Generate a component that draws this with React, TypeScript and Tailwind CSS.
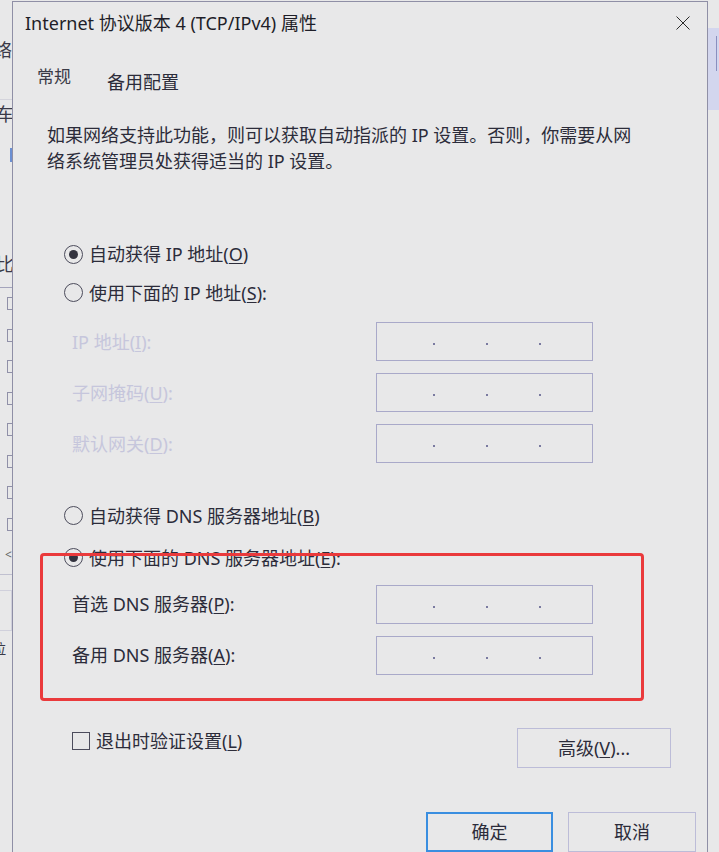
import React from "react";

// Small radio button used by the dialog
const Radio = ({ checked, children }: { checked?: boolean; children: React.ReactNode }) => (
  <div className="flex items-center h-[40px] pl-[51px]">
    <span className="w-[19px] h-[19px] rounded-full border-[1.5px] border-[#4c4c5c] flex items-center justify-center">
      {checked && <span className="w-[9px] h-[9px] rounded-full bg-[#33333f]" />}
    </span>
    <span className="ml-[6px]">{children}</span>
  </div>
);

// Empty IPv4 box with three dots
const IpBox = () => (
  <div className="w-[217px] h-[39px] border border-[#a9a9c9] flex items-center pl-[56px] pt-[5px] gap-[51px]">
    <span className="w-[2px] h-[2px] bg-[#7a7aa0]" />
    <span className="w-[2px] h-[2px] bg-[#7a7aa0]" />
    <span className="w-[2px] h-[2px] bg-[#7a7aa0]" />
  </div>
);

const Row = ({ label, disabled }: { label: React.ReactNode; disabled?: boolean }) => (
  <div className="flex items-center h-[39px] pl-[59px]">
    <div className={`w-[304px] ${disabled ? "text-[#c6c6dc]" : ""}`}>{label}</div>
    <IpBox />
  </div>
);

const Key = ({ k }: { k: string }) => <span className="underline underline-offset-2">{k}</span>;

const Btn = ({ children, w, primary }: { children: React.ReactNode; w: string; primary?: boolean }) => (
  <div
    className={`${w} h-[40px] flex items-center justify-center shrink-0 ${
      primary ? "border-2 border-[#3a8ee0]" : "border border-[#bcbcd8]"
    }`}
  >
    {children}
  </div>
);

const BgCheck = ({ on }: { on?: boolean }) => (
  <div className="w-[13px] h-[13px] border border-[#9090a8] ml-[7px] mb-[18.5px] flex items-center justify-end pr-[2px]">
    {on && <span className="w-[3px] h-[5px] bg-[#222]" />}
  </div>
);

export default function App() {
  return (
    <div className="w-[719px] h-[852px] overflow-hidden bg-[#e8e8e9] flex text-[18px] leading-[24px] text-[#2c2c3a] font-['Noto_Sans','Noto_Sans_CJK_SC',sans-serif]">
      {/* background window, left edge */}
      <div className="w-[12px] shrink-0 flex flex-col overflow-hidden text-[#3a3a48]">
        <div className="h-[38px]" />
        <div className="-ml-[6px] h-[24px] leading-[24px]">络</div>
        <div className="h-[38px] border-b border-[#d4d4dc]" />
        <div className="-ml-[4px] h-[24px] mt-[2px] leading-[24px]">车</div>
        <div className="h-[22px]" />
        <div className="ml-[10px] w-[2px] h-[14px] bg-[#6b8fd2]" />
        <div className="h-[90px]" />
        <div className="-ml-[4px] h-[24px] leading-[24px]">比</div>
        <div className="h-[12px] border-b border-[#a4a4bc]" />
        <div className="h-[9px]" />
        <BgCheck on />
        <BgCheck on />
        <BgCheck on />
        <BgCheck on />
        <BgCheck />
        <BgCheck on />
        <BgCheck on />
        <BgCheck on />
        <div className="ml-[5px] text-[12px] leading-[12px] text-[#666]">&lt;</div>
        <div className="h-[14px] border-b border-[#c0c0d0]" />
        <div className="h-[16px] border-b border-[#d0d0dc]" />
        <div className="h-[40px] border-b border-[#d0d0dc] border-r" />
        <div className="-ml-[8px] mt-[6px] h-[24px] leading-[24px] text-[14px]">拉</div>
      </div>

      {/* dialog */}
      <div className="w-[696px] shrink-0 mt-[1px] border-t border-l border-r border-[#8f8fa6] flex flex-col relative">
        {/* title bar */}
        <div className="h-[44px] flex items-center justify-between pl-[12px] pr-[17px]">
          <span className="text-[18px] text-[#1e1e28]">Internet 协议版本 4 (TCP/IPv4) 属性</span>
          <svg width="14" height="14" viewBox="0 0 14 14">
            <path d="M0.5 0.5 L13.5 13.5 M13.5 0.5 L0.5 13.5" stroke="#2a2a2a" strokeWidth="1" fill="none" />
          </svg>
        </div>

        {/* tabs */}
        <div className="h-[79px] flex items-start pl-[24px]">
          <span className="mt-[20px] text-[#3a3a46] text-[17px]">常规</span>
          <span className="mt-[25px] ml-[36px]">备用配置</span>
        </div>

        {/* description */}
        <div className="pl-[34px] leading-[26px] h-[52px] pt-[1px]">
          如果网络支持此功能，则可以获取自动指派的 IP 设置。否则，你需要从网
          <br />
          络系统管理员处获得适当的 IP 设置。
        </div>

        <div className="h-[63px]" />
        <Radio checked>
          自动获得 IP 地址(<Key k="O" />)
        </Radio>
        <Radio>
          使用下面的 IP 地址(<Key k="S" />):
        </Radio>

        <div className="flex flex-col gap-[12px] mt-[10px]">
          <Row disabled label={<>IP 地址(<Key k="I" />):</>} />
          <Row disabled label={<>子网掩码(<Key k="U" />):</>} />
          <Row disabled label={<>默认网关(<Key k="D" />):</>} />
        </div>

        <div className="h-[34px]" />
        <Radio>
          自动获得 DNS 服务器地址(<Key k="B" />)
        </Radio>
        <div className="h-[3px]" />
        <Radio checked>
          使用下面的 DNS 服务器地址(<Key k="E" />):
        </Radio>

        <div className="flex flex-col gap-[12px] mt-[8px]">
          <Row label={<>首选 DNS 服务器(<Key k="P" />):</>} />
          <Row label={<>备用 DNS 服务器(<Key k="A" />):</>} />
        </div>

        {/* validate + advanced */}
        <div className="flex items-start justify-between mt-[53px] pl-[59px] pr-[36px]">
          <div className="flex items-center h-[26px]">
            <span className="w-[18px] h-[18px] border-[1.5px] border-[#4c4c5c]" />
            <span className="ml-[6px]">
              退出时验证设置(<Key k="L" />)
            </span>
          </div>
          <Btn w="w-[154px]">
            高级(<Key k="V" />)...
          </Btn>
        </div>

        {/* ok / cancel */}
        <div className="flex justify-end gap-[15px] mt-[44px] pr-[11px]">
          <Btn w="w-[127px]" primary>
            确定
          </Btn>
          <Btn w="w-[128px]">取消</Btn>
        </div>

        {/* red annotation box */}
        <div className="absolute left-[27px] top-[551px] w-[604px] h-[148px] border-[3px] border-[#ea3a3c] rounded-[4px] pointer-events-none" />
      </div>

      {/* background window, right edge */}
      <div className="flex-1 flex flex-col">
        <div className="h-[28px]" />
        <div className="h-[82px] bg-[#d3d6ee] flex justify-end pr-[2px] pt-[8px]">
          <span className="w-[1px] h-[35px] bg-[#8a8fbf]" />
        </div>
      </div>
    </div>
  );
}
